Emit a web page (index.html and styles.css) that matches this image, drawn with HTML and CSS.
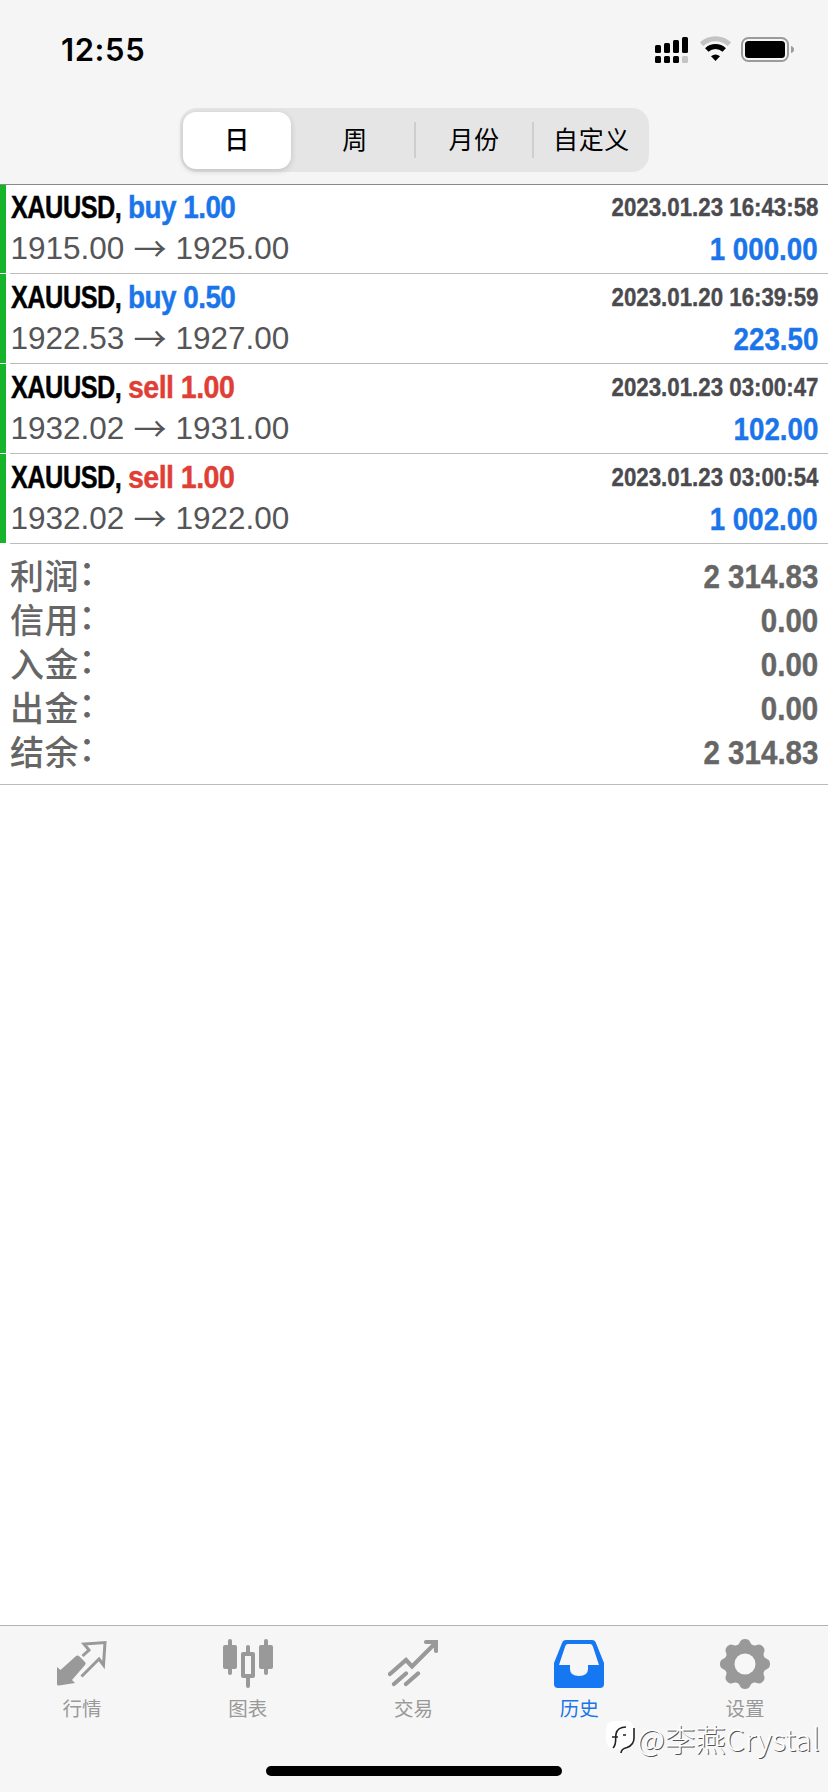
FILE: index.html
```
<!DOCTYPE html>
<html lang="zh-CN">
<head>
<meta charset="utf-8">
<title>历史</title>
<link rel="stylesheet" href="styles.css">
</head>
<body>
<div class="app">
  <header class="top">
    <div class="status">
      <span class="clock">12:55</span>
      <svg class="status-icons" width="140" height="28" viewBox="0 0 140 28">
        <g fill="#000">
          <rect x="0" y="9" width="6" height="8" rx="1.5"/><rect x="9" y="7" width="6" height="10" rx="1.5"/><rect x="18" y="4" width="6" height="13" rx="1.5"/><rect x="27" y="1" width="6" height="16" rx="1.5"/>
          <rect x="0" y="20" width="6" height="7" rx="1.5"/><rect x="9" y="20" width="6" height="7" rx="1.5"/><rect x="18" y="20" width="6" height="7" rx="1.5"/><rect x="27" y="20" width="6" height="7" rx="1.5" fill="#c4c4c4"/>
        </g>
        <path d="M46.6 8.3A20 20 0 0 1 74.4 8.3" fill="none" stroke="#c3c3c3" stroke-width="5"/>
        <path d="M51.8 14A12.8 12.8 0 0 1 69.2 14" fill="none" stroke="#000" stroke-width="5"/>
        <path d="M56 20.3Q60.5 16.5 65 20.3L60.5 25Z"/>
        <rect x="87" y="2" width="46" height="23" rx="6.5" fill="none" stroke="#9b9b9b" stroke-width="2"/>
        <rect x="90" y="5" width="40" height="17" rx="3.5"/>
        <path d="M136 10Q139 11 139 13.5T136 17Z" fill="#9b9b9b"/>
      </svg>
    </div>
    <nav class="segments">
      <span class="segment selected">日</span>
      <span class="segment">周</span>
      <span class="segment divided">月份</span>
      <span class="segment divided">自定义</span>
    </nav>
  </header>
  <main class="content">
    <section class="deals">
      <article class="deal">
        <div class="line first"><div class="title"><span class="symbol">XAUUSD,</span><b class="side buy">buy 1.00</b></div><time class="time">2023.01.23 16:43:58</time></div>
        <div class="line"><span class="prices">1915.00<i class="arrow">→</i>1925.00</span><span class="profit">1 000.00</span></div>
      </article>
      <article class="deal">
        <div class="line first"><div class="title"><span class="symbol">XAUUSD,</span><b class="side buy">buy 0.50</b></div><time class="time">2023.01.20 16:39:59</time></div>
        <div class="line"><span class="prices">1922.53<i class="arrow">→</i>1927.00</span><span class="profit">223.50</span></div>
      </article>
      <article class="deal">
        <div class="line first"><div class="title"><span class="symbol">XAUUSD,</span><b class="side sell">sell 1.00</b></div><time class="time">2023.01.23 03:00:47</time></div>
        <div class="line"><span class="prices">1932.02<i class="arrow">→</i>1931.00</span><span class="profit">102.00</span></div>
      </article>
      <article class="deal">
        <div class="line first"><div class="title"><span class="symbol">XAUUSD,</span><b class="side sell">sell 1.00</b></div><time class="time">2023.01.23 03:00:54</time></div>
        <div class="line"><span class="prices">1932.02<i class="arrow">→</i>1922.00</span><span class="profit">1 002.00</span></div>
      </article>
    </section>
    <section class="summary">
      <div class="total"><span class="label">利润<span class="colon" lang="ja">：</span></span><span class="value">2 314.83</span></div>
      <div class="total"><span class="label">信用<span class="colon" lang="ja">：</span></span><span class="value">0.00</span></div>
      <div class="total"><span class="label">入金<span class="colon" lang="ja">：</span></span><span class="value">0.00</span></div>
      <div class="total"><span class="label">出金<span class="colon" lang="ja">：</span></span><span class="value">0.00</span></div>
      <div class="total"><span class="label">结余<span class="colon" lang="ja">：</span></span><span class="value">2 314.83</span></div>
    </section>
  </main>
  <footer class="bottom">
    <nav class="tabs">
      <a class="tab">
        <svg class="icon" viewBox="0 0 50 50">
          <path d="M0 28 3.500 31 18.500 17.500Q20.500 15.500 22.500 17.500L28 23Q29.500 24.500 28 26L15 41 18 44 2 46.500Q0 46.800 0 45Z" fill="#999"/>
          <path d="M25.500 17 32 11 27 5 48 3.500 46.500 26 42 20 24.500 37.500" fill="none" stroke="#999" stroke-width="3"/>
        </svg>
        <span>行情</span>
      </a>
      <a class="tab">
        <svg class="icon" viewBox="0 0 50 50" fill="#999">
          <rect x="0" y="6" width="14" height="24" rx="2"/><rect x="5" y="0" width="4" height="36" rx="2"/>
          <rect x="36" y="6" width="14" height="24" rx="2"/><rect x="41" y="0" width="4" height="36" rx="2"/>
          <path d="M23 8a2 2 0 0 1 4 0v5h3a2 2 0 0 1 2 2v22a2 2 0 0 1-2 2h-3v8a2 2 0 0 1-4 0v-8h-3a2 2 0 0 1-2-2V15a2 2 0 0 1 2-2h3zM22 17v18h6V17z" fill-rule="evenodd"/>
        </svg>
        <span>图表</span>
      </a>
      <a class="tab">
        <svg class="icon" viewBox="0 0 50 50" fill="none" stroke="#999" stroke-width="4.200" stroke-linecap="round" stroke-linejoin="miter">
          <path d="M2 35 18 21 24 27.500 47 4.500M38 3H48V12M6 45 18 34.500M18 45 30 34.500"/>
        </svg>
        <span>交易</span>
      </a>
      <a class="tab active">
        <svg class="icon" viewBox="0 0 50 50">
          <path d="M12 1H38Q41 1 42 4L50 24V45Q50 49 46 49H4Q0 49 0 45V24L8 4Q9 1 12 1ZM14 5Q12 5 11.300 7L5 26H16V30Q16 37 25 37T34 30V26H45L38.700 7Q38 5 36 5Z" fill="#1677f2" fill-rule="evenodd"/>
        </svg>
        <span>历史</span>
      </a>
      <a class="tab">
        <svg class="icon" viewBox="0 0 50 50">
          <g fill="#999">
            <circle cx="25" cy="25" r="20.500"/>
            <path id="tooth" d="M17 8 20 3Q21 0 25 0T30 3L33 8V42L30 47Q29 50 25 50T20 47L17 42Z"/>
            <use href="#tooth" transform="rotate(45 25 25)"/><use href="#tooth" transform="rotate(90 25 25)"/><use href="#tooth" transform="rotate(135 25 25)"/>
          </g>
          <circle cx="25" cy="25" r="10.500" fill="#f7f7f7"/>
        </svg>
        <span>设置</span>
      </a>
    </nav>
    <div class="home"></div>
    <div class="watermark">
      <svg width="32" height="36" viewBox="0 0 32 36">
        <path d="M10 1H20Q29 1 29 10V19Q29 27 21 28L16 33 14 29H10Q1 29 1 19V10Q1 1 10 1Z" fill="#fff"/>
        <path d="M8 28C12 24 10 20 11 14 12 9 15 7 21 7M7 17h6M18 15h3M29 8V18Q29 25 22 27.500 16 29 16 33" fill="none" stroke="#222" stroke-width="1.600"/>
      </svg>
      <span>@李燕Crystal</span>
    </div>
  </footer>
</div>
</body>
</html>
```
FILE: styles.css
```
* { box-sizing: border-box; }
body { margin: 0; background: #fff; font-family: "Liberation Sans", "Noto Sans CJK SC", sans-serif; }
.app { width: 828px; height: 1792px; display: flex; flex-direction: column; overflow: hidden; }
.top { height: 185px; background: #f5f5f5; border-bottom: 1px solid #8a8a8a; flex: none; }
.status { height: 108px; padding: 0 33px 0 61px; display: flex; justify-content: space-between; align-items: flex-start; }
.clock { font: 600 31px/38px Inter, sans-serif; margin-top: 31px; letter-spacing: 0.6px; }
.status-icons { margin-top: 36px; }
.segments { width: 469px; height: 64px; margin-left: 180px; border-radius: 17px; background: #e5e5e6; display: grid; grid-template-columns: 116px 118px 118px 117px; align-items: center; font: 400 25px/35px "Noto Sans CJK SC", sans-serif; letter-spacing: 0.6px; }
.segment { text-align: center; height: 36px; line-height: 33px; }
.segment.selected { font-weight: 500; background: #fff; border-radius: 13px; height: 57px; margin: 0 5px 0 3px; line-height: 53px; box-shadow: 0 2px 6px rgba(0,0,0,.16); }
.divided { border-left: 2px solid #cecece; }
.content { flex: 1; }
.deal { height: 90px; padding: 6px 10px 0 10.5px; position: relative; }
.deal:first-child { height: 89px; padding-top: 5px; }
.deal::before { content: ""; position: absolute; left: 0; top: 0; bottom: 1px; width: 6px; background: #16b42b; }
.deal::after { content: ""; position: absolute; left: 10px; right: 0; bottom: 0; height: 1px; background: #bcbcbc; }
.line { display: flex; justify-content: space-between; align-items: center; height: 45px; }
.first { height: 36px; }
.symbol, .side, .time, .profit, .value { font-weight: 700; white-space: pre; -webkit-text-stroke: 0.4px currentColor; }
.title { display: flex; font-size: 31px; letter-spacing: -0.6px; }
.symbol { width: 117.5px; transform: scaleX(.815); transform-origin: left; }
.side { transform: scaleX(.9); transform-origin: left; }
.side.sell { transform: scaleX(.922); }
.buy, .profit { color: #1b75ea; }
.sell { color: #df3f36; }
.time { font-size: 26px; line-height: 30px; color: #4b4b4f; margin-top: -2px; transform: scaleX(.857); transform-origin: right; }
.prices { font-size: 31.5px; color: #555558; display: flex; align-items: center; }
.arrow { font: 400 33px/36px "Noto Sans CJK SC", sans-serif; width: 51px; text-align: center; margin-top: -4px; }
.profit { font-size: 31.5px; transform: scaleX(.88); transform-origin: right; margin-top: 1px; }
.summary { height: 241px; padding: 11px 10px 0; border-bottom: 1px solid #bcbcbc; }
.total { display: flex; justify-content: space-between; align-items: center; height: 44px; color: #666; }
.label { font: 500 34px/44px "Noto Sans CJK SC", sans-serif; letter-spacing: 0.5px; margin-top: -4px; }
.colon { font-family: "Noto Sans CJK JP", sans-serif; margin-left: -9px; position: relative; top: -2px; }
.value { font-size: 33px; transform: scaleX(.895); transform-origin: right; }
.bottom { height: 167px; background: #f6f6f6; border-top: 1px solid #b2b2b2; position: relative; flex: none; }
.tabs { display: grid; grid-template-columns: repeat(5, 1fr); padding: 13px 0 0; margin-left: -1px; }
.tab { display: flex; flex-direction: column; align-items: center; color: #999; font: 400 19.5px/28px "Noto Sans CJK SC", sans-serif; gap: 5px; }
.active { color: #1b75ea; }
.icon { width: 50px; height: 50px; }
.home { position: absolute; left: 266px; top: 140px; width: 296px; height: 10px; border-radius: 5px; background: #000; }
.watermark { position: absolute; left: 605px; top: 94px; display: flex; align-items: center; color: #fff; font: 300 30.5px/36px "Noto Sans CJK SC", sans-serif; text-shadow: 1px 1px 0 #555; white-space: nowrap; }
```
